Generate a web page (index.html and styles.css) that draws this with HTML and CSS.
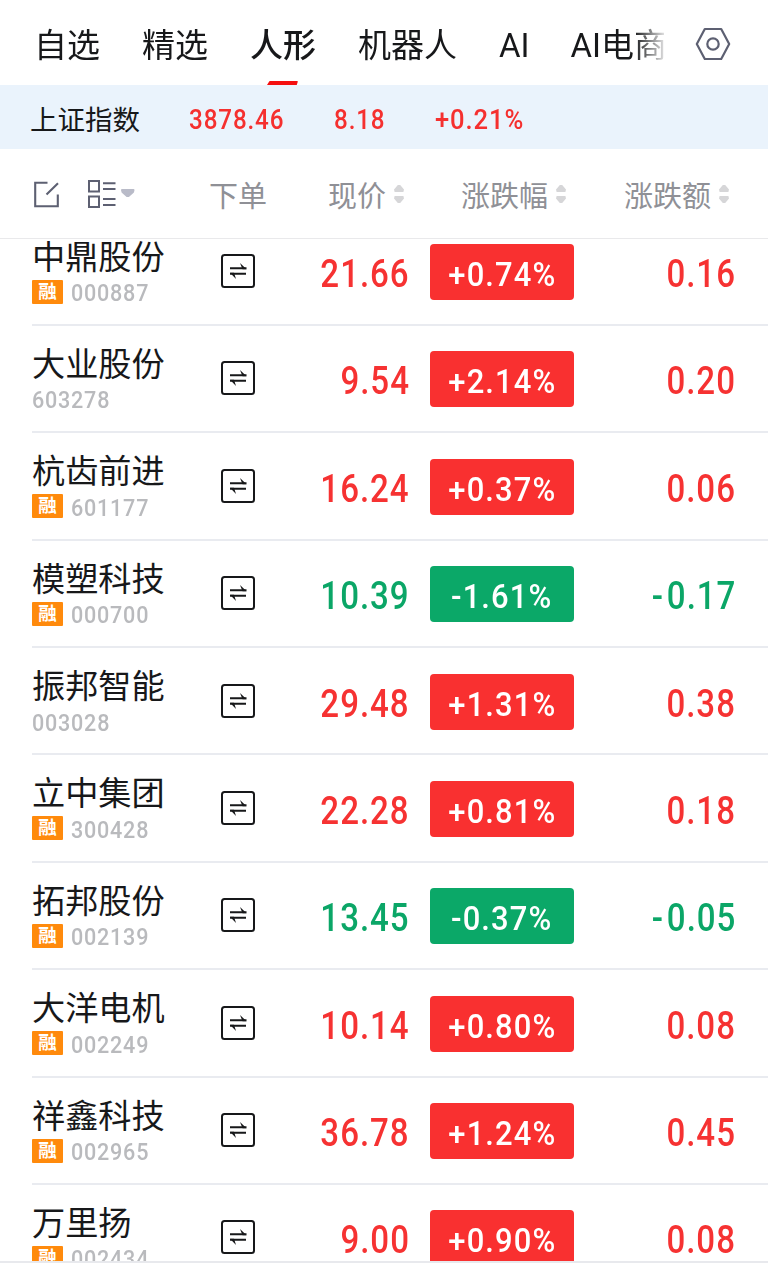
FILE: index.html
```
<!DOCTYPE html>
<html lang="zh-CN">
<head>
    <meta charset="UTF-8">
    <meta name="viewport" content="width=device-width, initial-scale=1.0">
    <title>自选股</title>
    <link rel="stylesheet" href="styles.css">
</head>
<body>

<nav class="tabs">
    <div class="tab-list">
        <a class="tab">自选</a>
        <a class="tab">精选</a>
        <a class="tab active">人形</a>
        <a class="tab">机器人</a>
        <a class="tab">AI</a>
        <a class="tab">AI电商</a>
    </div>
    <svg class="settings" width="36" height="34" viewBox="0 0 36 34" fill="none" stroke="#5d6072" stroke-width="2.2" stroke-linejoin="round">
        <path d="M9.8 2h16.4L34.2 17l-8 15H9.8L1.8 17z"/>
        <circle cx="18" cy="17" r="5.7"/>
    </svg>
</nav>

<div class="index-bar">
    <span class="index-name">上证指数</span>
    <span class="index-value"><span class="num">3878.46</span></span>
    <span class="index-diff"><span class="num">8.18</span></span>
    <span class="index-rate"><span class="num">+0.21%</span></span>
</div>

<div class="table-head">
    <div class="tools">
        <svg width="27" height="27" viewBox="0 0 27 27" fill="none" stroke="#5d6072" stroke-width="2.1">
            <path d="M14.500 1.800H2.200v23.500H24.800V13.500M13.500 13.500L25 2.200"/>
        </svg>
        <svg class="layout-icon" width="48" height="30" viewBox="0 0 48 30" fill="none" stroke="#5d6072" stroke-width="2">
            <path d="M2 2h10v10.500H2zM2 17.500h10V28H2zM16 4.200H28.500M16 10H28.500M16 20H28.500M16 26H28.500"/>
            <path d="M35 11h11.500l-.5 2-4.500 4h-1.500l-4.500-4z" fill="#b9bbc8" stroke="#b9bbc8" stroke-linejoin="round"/>
        </svg>
    </div>
    <span class="head-order">下单</span>
    <span class="head-cell">现价<i class="sort"></i></span>
    <span class="head-cell">涨跌幅<i class="sort"></i></span>
    <span class="head-cell">涨跌额<i class="sort"></i></span>
</div>

<div class="list">
    <div class="rows" id="rows"></div>
</div>

<script>
    // name, code, margin flag, price, rate, diff
    const stocks = [
        ["中鼎股份", "000887", true, "21.66", "+0.74%", "0.16"],
        ["大业股份", "603278", false, "9.54", "+2.14%", "0.20"],
        ["杭齿前进", "601177", true, "16.24", "+0.37%", "0.06"],
        ["模塑科技", "000700", true, "10.39", "-1.61%", "-0.17"],
        ["振邦智能", "003028", false, "29.48", "+1.31%", "0.38"],
        ["立中集团", "300428", true, "22.28", "+0.81%", "0.18"],
        ["拓邦股份", "002139", true, "13.45", "-0.37%", "-0.05"],
        ["大洋电机", "002249", true, "10.14", "+0.80%", "0.08"],
        ["祥鑫科技", "002965", true, "36.78", "+1.24%", "0.45"],
        ["万里扬", "002434", true, "9.00", "+0.90%", "0.08"]
    ];

    document.getElementById("rows").innerHTML = stocks.map(([name, code, margin, price, rate, diff]) => `
        <div class="row ${diff.startsWith("-") ? "down" : "up"}">
            <div class="stock">
                <div class="name">${name}</div>
                <div class="meta">${margin ? '<span class="tag">融</span>' : ""}<span class="num code">${code}</span></div>
            </div>
            <svg class="trade" width="34" height="34" viewBox="0 0 34 34" fill="none" stroke="#17181a" stroke-width="2">
                <rect x="1" y="1" width="32" height="32" rx="2.500"/>
                <path d="M9 14.200h16.500M25 19.800H9"/>
                <path d="M19 9l6.500 6.200h-4zM15 25l-6-6.200h4z" fill="#17181a" stroke="none"/>
            </svg>
            <div class="price"><span class="num">${price}</span></div>
            <div class="rate"><span class="num">${rate}</span></div>
            <div class="diff"><span class="num">${diff}</span></div>
        </div>`).join("");
</script>

</body>
</html>
```
FILE: styles.css
```
body {
    margin: 0;
    height: 1266px;
    overflow: hidden;
    background: #fff;
    color: #17181a;
    font-family: Roboto, "Noto Sans CJK SC", sans-serif;
}
svg {
    display: block;
}
/* narrow digits */
.num {
    display: inline-block;
    transform: scaleX(.88);
    transform-origin: left center;
    letter-spacing: .036em;
    white-space: nowrap;
}
.tabs {
    display: flex;
    align-items: center;
    height: 85px;
    padding-left: 34px;
}
.tab-list {
    display: flex;
    gap: 42px;
    width: 630px;
    height: 85px;
    overflow: hidden;
    -webkit-mask-image: linear-gradient(to right, #000 600px, transparent 635px);
    mask-image: linear-gradient(to right, #000 600px, transparent 635px);
}
.tab {
    position: relative;
    flex: none;
    font-size: 33px;
    line-height: 91px;
}
.tab:last-child {
    margin-left: -1px;
}
.tab.active {
    font-weight: 500;
}
.tab.active::after {
    content: "";
    position: absolute;
    left: 17px;
    top: 81px;
    width: 31px;
    height: 4px;
    background: #f50f0f;
    border-radius: 3px 1px 0 0;
    clip-path: polygon(8% 0, 100% 0, 96% 100%, 0 100%);
}
.settings {
    margin-left: 31px;
    margin-top: 3px;
}
.index-bar {
    display: grid;
    grid-template-columns: 159px 145px 101px 1fr;
    align-items: center;
    height: 64px;
    padding-left: 30px;
    background: #eaf3fc;
    font-size: 27.5px;
    line-height: 64px;
    color: #f5302f;
}
.index-name {
    color: #17181a;
    padding-top: 4px;
}
.index-bar .num {
    padding-top: 1px;
    font-weight: 500;
}
.index-rate .num {
    transform: scaleX(.93);
}
.table-head {
    display: grid;
    grid-template-columns: 175px 119px 133px 163px 1fr;
    align-items: center;
    height: 89px;
    padding-left: 33px;
    border-bottom: 1px solid #e9e9eb;
    font-size: 29px;
    color: #8f9096;
    line-height: 89px;
}
.tools {
    display: flex;
    align-items: center;
    gap: 27px;
    margin-bottom: 3px;
}
.head-order, .head-cell {
    padding-top: 4px;
    padding-left: 1px;
}
.head-cell {
    display: flex;
    align-items: center;
    gap: 8px;
}
.sort {
    display: flex;
    flex-direction: column;
    gap: 4px;
    margin-bottom: 7px;
}
.sort::before, .sort::after {
    content: "";
    width: 10px;
    height: 7px;
    background: #d6d6d8;
    clip-path: polygon(38% 0, 62% 0, 100% 65%, 94% 100%, 6% 100%, 0 65%);
}
.sort::after {
    transform: scaleY(-1);
}
.list {
    height: 1022px;
    overflow: hidden;
    border-bottom: 2px solid #e8e9ed;
}
.rows {
    margin-top: -20.4px;
}
.row {
    display: grid;
    grid-template-columns: 189px 34px 154px 165px 161px;
    box-sizing: border-box;
    height: 107.375px;
    margin-left: 32px;
    border-bottom: 2px solid #e9ebf0;
}
.name {
    margin-top: 17px;
    font-size: 33.2px;
    line-height: 44px;
}
.meta {
    display: flex;
    align-items: center;
    gap: 8px;
    height: 24px;
}
.tag {
    width: 31px;
    height: 24px;
    background: #ff8a0c;
    border-radius: 1px;
    color: #fff;
    font-size: 18.5px;
    font-weight: 700;
    line-height: 24px;
    text-align: center;
}
.code {
    font-size: 24.5px;
    line-height: 24px;
    font-weight: 500;
    color: #b9babd;
    padding-top: 3px;
}
.trade {
    margin-top: 35.5px;
}
.price, .diff {
    margin-top: 31.4px;
    font-size: 38px;
    font-weight: 500;
    line-height: 48px;
    text-align: right;
}
.price .num, .diff .num {
    margin-right: -1px;
    transform: scaleX(.87);
    transform-origin: right center;
    letter-spacing: .03em;
}
.up .price, .up .diff {
    color: #f63232;
}
.down .price, .down .diff {
    color: #0ba667;
}
.down .diff .num::first-letter {
    letter-spacing: .12em;
}
.rate {
    width: 144px;
    height: 56px;
    margin-top: 25.4px;
    margin-left: 21px;
    border-radius: 4px;
    color: #fff;
    font-size: 34px;
    font-weight: 500;
    line-height: 61px;
    text-align: center;
}
.rate .num {
    transform: scaleX(.91);
    transform-origin: center;
}
.up .rate {
    background: #f93030;
}
.down .rate {
    background: #0ba868;
}
```
